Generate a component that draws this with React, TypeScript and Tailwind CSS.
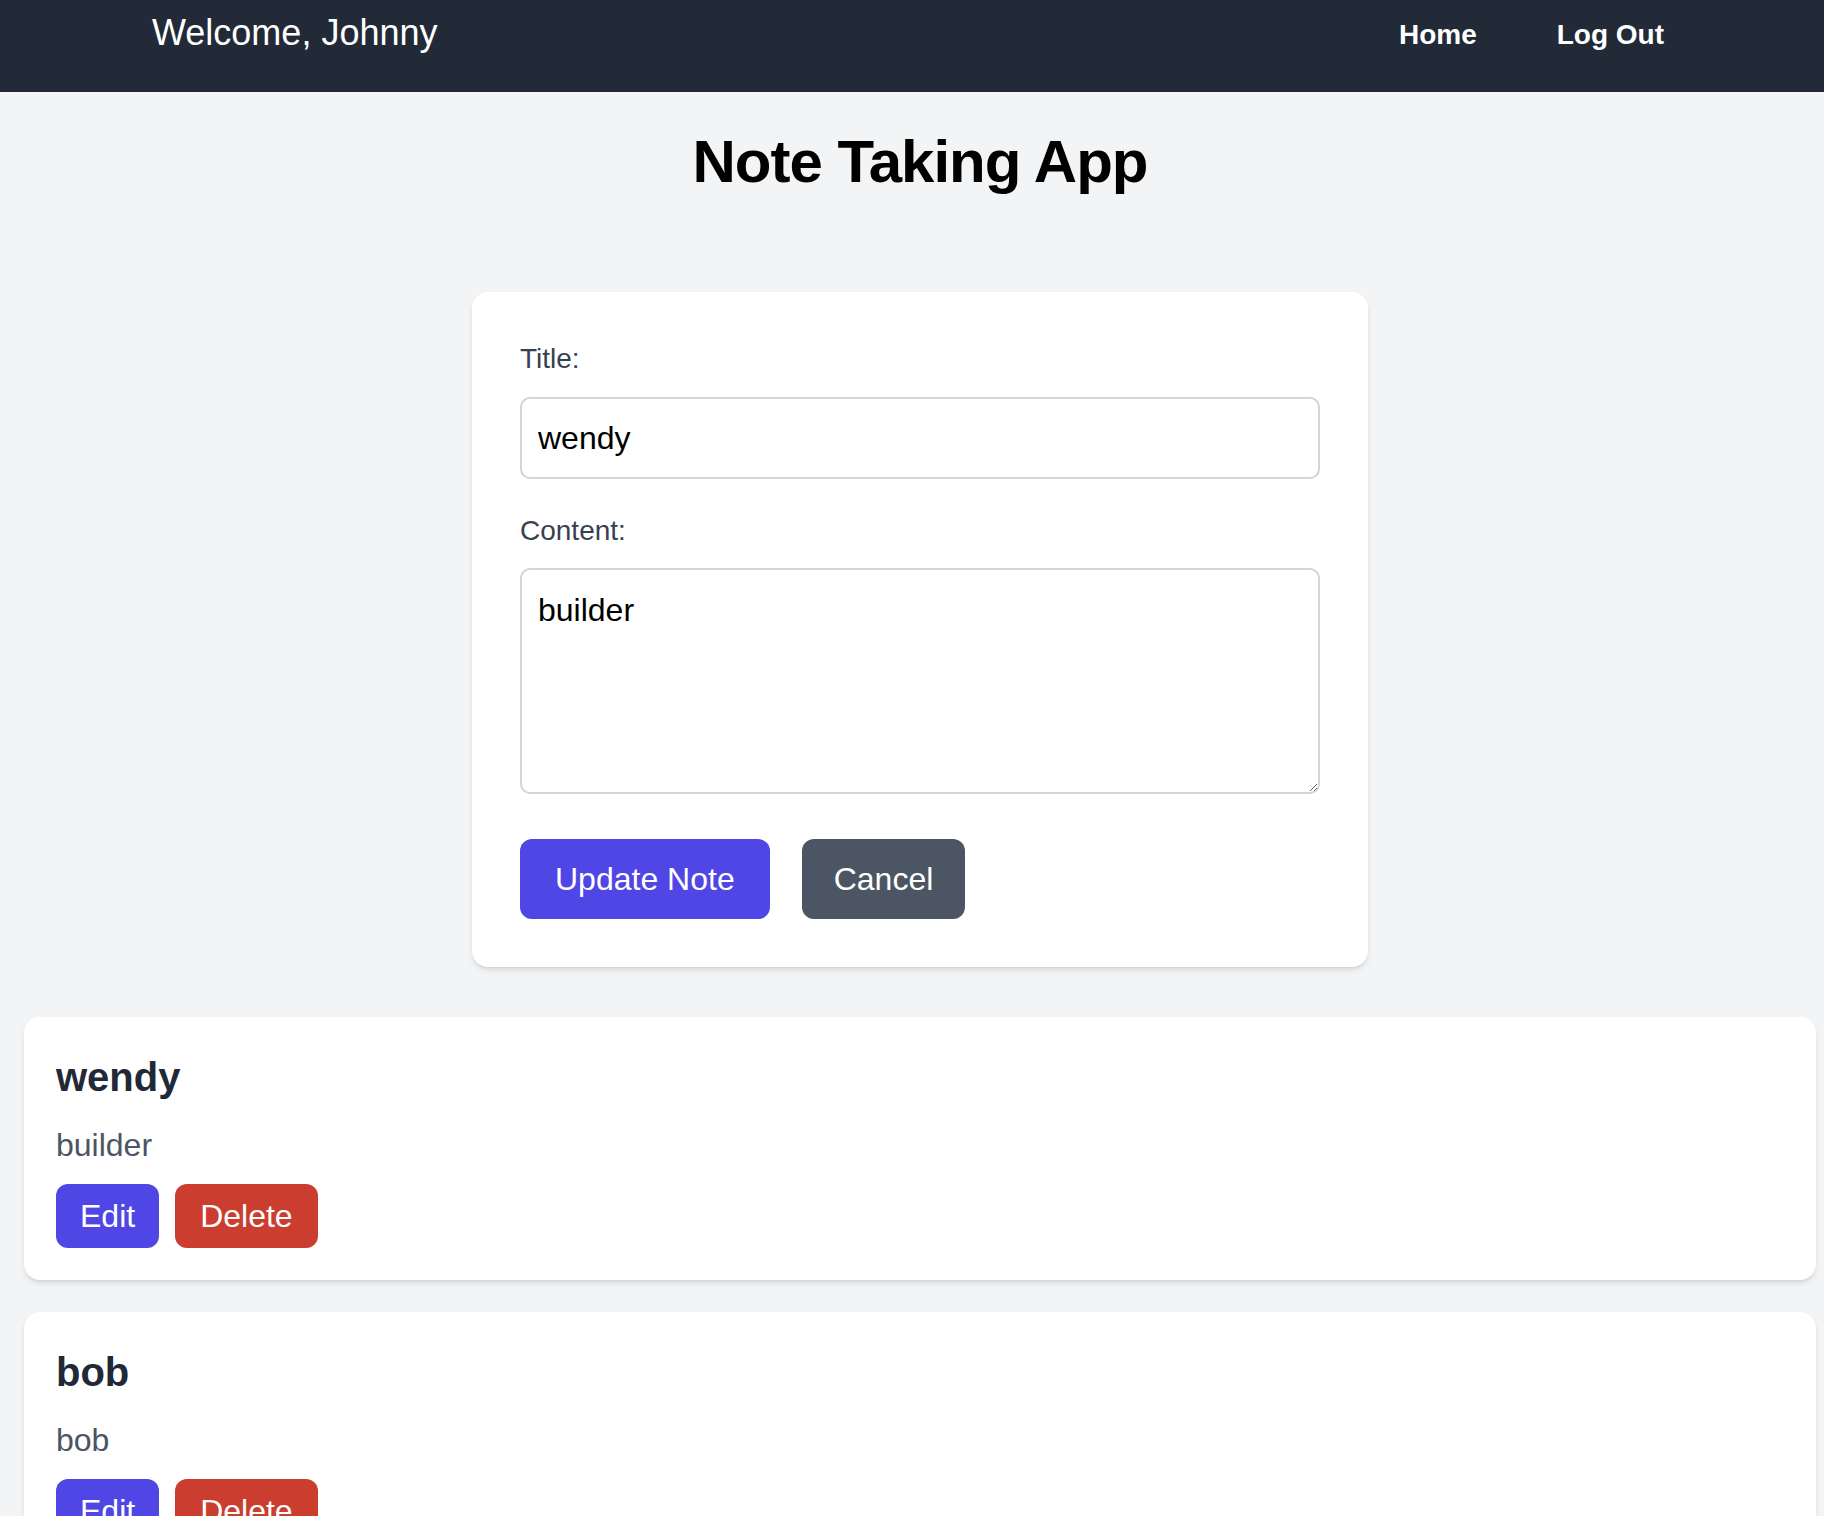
const notes = [
  { id: 1, title: "wendy", content: "builder" },
  { id: 2, title: "bob", content: "bob" },
  { id: 3, title: "alice", content: "notes" },
];

function NavBar() {
  return (
    <nav className="h-[92px] bg-[#222937] pl-[152px] pr-[160px]">
      <div className="flex h-[66px] items-center justify-between">
        <span className="text-[36px] leading-[56px] text-white">Welcome, Johnny</span>
        <div className="flex items-center gap-[80px] pt-[4px]">
          <a className="text-[28px] font-semibold leading-[40px] text-white">Home</a>
          <a className="text-[28px] font-semibold leading-[40px] text-white">Log Out</a>
        </div>
      </div>
    </nav>
  );
}

function NoteForm() {
  return (
    <div className="mx-auto w-[896px] rounded-[16px] bg-white px-[48px] pt-[47px] pb-[48px] shadow-md">
      <div className="mb-[32px]">
        <label className="mb-[18px] block text-[28px] font-medium leading-[40px] text-[#374151]">Title:</label>
        <input
          type="text"
          defaultValue="wendy"
          className="block h-[82px] w-full rounded-[10px] border-2 border-[#d1d5db] bg-white px-[16px] text-[32px] text-black outline-none"
        />
      </div>
      <div className="mb-[45px]">
        <label className="mb-[17px] block text-[28px] font-medium leading-[40px] text-[#374151]">Content:</label>
        <textarea
          defaultValue="builder"
          className="block h-[226px] w-full rounded-[10px] border-2 border-[#d1d5db] bg-white px-[16px] py-[16px] text-[32px] leading-[48px] text-black outline-none"
        />
      </div>
      <div className="flex gap-[32px]">
        <button className="h-[80px] rounded-[12px] bg-[#4f46e5] px-[35px] text-[32px] leading-[48px] text-white">
          Update Note
        </button>
        <button className="h-[80px] rounded-[12px] bg-[#4b5563] px-[32px] text-[32px] leading-[48px] text-white">
          Cancel
        </button>
      </div>
    </div>
  );
}

function NoteCard({ title, content }: { title: string; content: string }) {
  return (
    <div className="mb-[32px] rounded-[16px] bg-white p-[32px] shadow-md">
      <h2 className="mb-[16px] text-[40px] font-bold leading-[56px] text-[#1f2937]">{title}</h2>
      <p className="mb-[15px] text-[32px] leading-[48px] text-[#4b5563]">{content}</p>
      <div className="flex gap-[16px]">
        <button className="h-[64px] rounded-[12px] bg-[#4f46e5] px-[24px] text-[32px] leading-[48px] text-white">Edit</button>
        <button className="h-[64px] rounded-[12px] bg-[#cb3d2f] px-[25px] text-[32px] leading-[48px] text-white">Delete</button>
      </div>
    </div>
  );
}

export default function App() {
  return (
    <div
      className="h-[1516px] overflow-hidden bg-[#f3f4f6]"
      style={{ fontFamily: '"Liberation Sans", Arial, sans-serif' }}
    >
      <NavBar />
      <main className="pl-[24px] pr-[8px]">
        <h1 className="mt-[34px] text-center text-[60px] font-bold leading-[72px] tracking-[-1px] text-black">
          Note Taking App
        </h1>
        <div className="mt-[94px]">
          <NoteForm />
        </div>
        <div className="mt-[50px]">
          {notes.map((n) => (
            <NoteCard key={n.id} title={n.title} content={n.content} />
          ))}
        </div>
      </main>
    </div>
  );
}
